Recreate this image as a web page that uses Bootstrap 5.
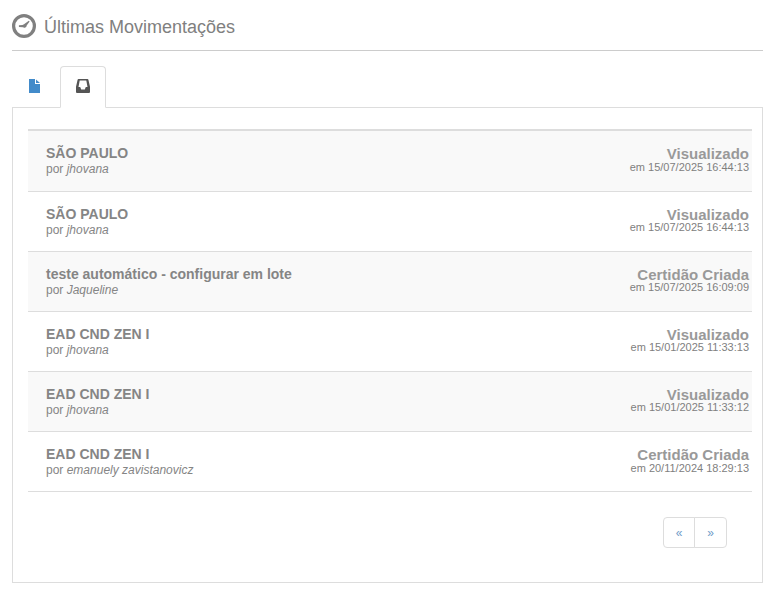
<!DOCTYPE html>
<html lang="pt-BR">
<head>
<meta charset="utf-8">
<meta name="viewport" content="width=device-width, initial-scale=1">
<title>Últimas Movimentações</title>
<link href="https://cdn.jsdelivr.net/npm/bootstrap@5.3.0/dist/css/bootstrap.min.css" rel="stylesheet">
<style>
body { font-family: "Liberation Sans", Arial, sans-serif; font-size: 14px; color: #858585; background: #fff; padding: 0 14px 0 12px; }
.page-title { height: 51px; border-bottom: 1px solid #ccc; padding-top: 2px; margin-bottom: 15px; }
.page-title h1 { font-size: 18px; line-height: 24px; margin: 0 0 0 8px; padding-top: 2px; font-weight: 400; color: #808080; }
.nav-tabs { --bs-nav-tabs-border-color: #ddd; --bs-nav-tabs-border-radius: 4px; --bs-nav-tabs-link-active-border-color: #ddd #ddd #fff; height: 42px; }
.nav-tabs .nav-link { height: 42px; padding: 12px 15px; color: #428bca; width: 46px; margin-right: 2px; }
.nav-tabs .nav-link.active { color: #555; }
.nav-tabs svg { display: block; }
.panel-body { border: 1px solid #ddd; border-top: 0; height: 475px; padding: 21px 10px 0 15px; }
.moves { border-top: 2px solid #ddd; }
.move { height: 60px; border-bottom: 1px solid #ddd; padding: 14px 3px 0 18px; }
.move:first-child { height: 61px; }
.move:nth-child(odd) { background: #f9f9f9; }
.move-name { font-weight: 700; line-height: 16px; }
.move-by { font-size: 12px; line-height: 17px; }
.move-state { font-size: 15px; font-weight: 700; line-height: 16px; color: #999; padding-top: 1px; }
.move-date { font-size: 11px; line-height: 9px; color: #808080; }
.move:first-child .move-date, .move:last-child .move-date { line-height: 11px; }
.pagination { --bs-pagination-color: #6f9cc8; --bs-pagination-border-color: #ddd; --bs-pagination-border-radius: 4px; margin: 25px 25px 0 0; }
.page-link { font-size: 12px; line-height: 19px; height: 31px; width: 33px; padding: 6px 0; text-align: center; }
.page-item:first-child .page-link { width: 32px; }
</style>
</head>
<body>
<header class="page-title d-flex align-items-center">
  <svg width="24" height="24" viewBox="0 0 24 24" aria-hidden="true"><circle cx="12" cy="12" r="10.4" fill="none" stroke="#808080" stroke-width="3.2"/><path d="M16.8 6.8 12 10.2 10.5 11 6.9 11.2v1.8l4 .3a2.4 2.4 0 0 0 3.8-1.9l2.9-3.8z" fill="#808080"/></svg>
  <h1>Últimas Movimentações</h1>
</header>
<ul class="nav nav-tabs">
  <li class="nav-item"><a class="nav-link" href="#" aria-label="Documentos"><svg width="14" height="14" viewBox="0 0 14 14" fill="currentColor"><path d="M1 0h6v5h5v9H1z"/><path d="M8 0.4v3.7h4z"/></svg></a></li>
  <li class="nav-item"><a class="nav-link active" href="#" aria-label="Caixa de entrada"><svg width="14" height="14" viewBox="0 0 14 14" fill="currentColor"><path fill-rule="evenodd" d="M2.5 0h9q.7 0 .9.7L14 7.8V13q0 1-1 1H1q-1 0-1-1V7.8L1.6.7Q1.8 0 2.5 0zM3.7 1.6 2.5 8H4.2l1 2.4h3.6l1-2.4h1.7l-1.2-6.4z"/></svg></a></li>
</ul>
<main class="panel-body">
  <div class="moves">
    <div class="move d-flex justify-content-between"><div><div class="move-name">SÃO PAULO</div><div class="move-by">por <em>jhovana</em></div></div><div class="text-end"><div class="move-state">Visualizado</div><div class="move-date">em 15/07/2025 16:44:13</div></div></div>
    <div class="move d-flex justify-content-between"><div><div class="move-name">SÃO PAULO</div><div class="move-by">por <em>jhovana</em></div></div><div class="text-end"><div class="move-state">Visualizado</div><div class="move-date">em 15/07/2025 16:44:13</div></div></div>
    <div class="move d-flex justify-content-between"><div><div class="move-name">teste automático - configurar em lote</div><div class="move-by">por <em>Jaqueline</em></div></div><div class="text-end"><div class="move-state">Certidão Criada</div><div class="move-date">em 15/07/2025 16:09:09</div></div></div>
    <div class="move d-flex justify-content-between"><div><div class="move-name">EAD CND ZEN I</div><div class="move-by">por <em>jhovana</em></div></div><div class="text-end"><div class="move-state">Visualizado</div><div class="move-date">em 15/01/2025 11:33:13</div></div></div>
    <div class="move d-flex justify-content-between"><div><div class="move-name">EAD CND ZEN I</div><div class="move-by">por <em>jhovana</em></div></div><div class="text-end"><div class="move-state">Visualizado</div><div class="move-date">em 15/01/2025 11:33:12</div></div></div>
    <div class="move d-flex justify-content-between"><div><div class="move-name">EAD CND ZEN I</div><div class="move-by">por <em>emanuely zavistanovicz</em></div></div><div class="text-end"><div class="move-state">Certidão Criada</div><div class="move-date">em 20/11/2024 18:29:13</div></div></div>
  </div>
  <ul class="pagination justify-content-end">
    <li class="page-item"><a class="page-link" href="#" aria-label="Anterior">«</a></li>
    <li class="page-item"><a class="page-link" href="#" aria-label="Próxima">»</a></li>
  </ul>
</main>
<script src="https://cdn.jsdelivr.net/npm/bootstrap@5.3.0/dist/js/bootstrap.bundle.min.js"></script>
</body>
</html>
